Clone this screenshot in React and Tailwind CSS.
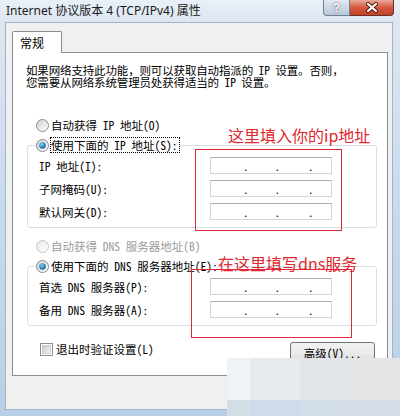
import React from 'react';

const uiFont = "[font-family:'Noto_Sans_Mono_CJK_SC','Noto_Sans_CJK_SC',sans-serif]";

const Radio = ({ checked, disabled, id }) => (
    <svg width="13" height="13" viewBox="0 0 13 13" className="shrink-0">
        <defs>
            <linearGradient id={`rf-${id}`} x1="0" y1="0" x2="1" y2="1">
                <stop offset="0" stopColor={disabled ? '#e6e6e6' : '#cfd1d4'} />
                <stop offset="1" stopColor="#ffffff" />
            </linearGradient>
            <radialGradient id={`rd-${id}`} cx="0.4" cy="0.35" r="0.7">
                <stop offset="0" stopColor="#8fd3f5" />
                <stop offset="0.6" stopColor="#2f8ac0" />
                <stop offset="1" stopColor="#1d4f74" />
            </radialGradient>
        </defs>
        <circle cx="6.5" cy="6.5" r="6" fill={`url(#rf-${id})`} stroke={disabled ? '#c4c4c4' : '#8a8c8f'} />
        {checked && <circle cx="6.5" cy="6.5" r="3.3" fill={`url(#rd-${id})`} />}
    </svg>
);

const Checkbox = () => (
    <svg width="13" height="13" viewBox="0 0 13 13" className="shrink-0">
        <defs>
            <linearGradient id="cb" x1="0" y1="0" x2="1" y2="1">
                <stop offset="0" stopColor="#c5c9ce" />
                <stop offset="1" stopColor="#f7f7f7" />
            </linearGradient>
        </defs>
        <rect x="0.5" y="0.5" width="12" height="12" fill="#fff" stroke="#8e8f8f" />
        <rect x="2.5" y="2.5" width="8" height="8" fill="url(#cb)" stroke="#b5b8bc" strokeWidth="0.6" />
    </svg>
);

const IpBox = () => (
    <div className="flex items-end w-[122px] h-[17px] bg-white border border-[#d2d5da] border-t-[#abadb3] text-[11px] leading-[14px] text-black">
        <span className="ml-[32px]">.</span>
        <span className="ml-[26px]">.</span>
        <span className="ml-[28px]">.</span>
    </div>
);

const Row = ({ label, first }) => (
    <div className={`flex items-center h-[23px] ${first ? '-mt-px' : ''}`}>
        <span className="w-[174px] pl-[3px] whitespace-nowrap">{label}</span>
        <IpBox />
    </div>
);

export default function App() {
    return (
        <div className={`relative w-[400px] h-[416px] overflow-hidden bg-gradient-to-b from-[#dfe8f3] via-[#c9daec] to-[#b9cfe7] ${uiFont}`}>
            {/* Title bar */}
            <div className="h-[22px] flex items-center pl-[6px] text-[12px] text-[#1b1b1b] [font-family:'Noto_Sans','Noto_Sans_CJK_SC',sans-serif] bg-gradient-to-b from-[#e9f0f7] to-[#dce6f1]">
                Internet 协议版本 4 (TCP/IPv4) 属性
            </div>
            <div className="absolute top-0 left-[323px] flex">
                <div className="w-[27px] h-[16px] rounded-bl-[4px] border border-t-0 border-[#6f819a] bg-gradient-to-b from-[#e4ebf3] to-[#b7c6d8] flex items-center justify-center text-[12px] leading-none font-bold text-white [text-shadow:0_0_2px_#2d3d52] [font-family:'Liberation_Sans',sans-serif]">
                    ?
                </div>
                <div className="w-[44px] h-[16px] rounded-br-[4px] border border-l-0 border-t-0 border-[#6b2f24] bg-gradient-to-b from-[#e9a897] via-[#d4583f] to-[#c3402a] flex items-center justify-center">
                    <svg width="14" height="11" viewBox="0 0 14 11">
                        <path d="M3 2 L11 9 M11 2 L3 9" stroke="#4a1a12" strokeWidth="4" strokeLinecap="round" />
                        <path d="M3 2 L11 9 M11 2 L3 9" stroke="#ffffff" strokeWidth="2.2" strokeLinecap="round" />
                    </svg>
                </div>
            </div>

            {/* Client area */}
            <div className="ml-[5px] w-[388px] h-[388px] bg-[#f0f0f0] border border-[#a3b4c8]">
                <div className="pt-[8px] pl-[6px]">
                    {/* Tab */}
                    <div className="relative z-10 w-[50px] h-[22px] -mb-px bg-white border border-b-0 border-[#898c95] rounded-t-[2px] flex items-center pl-[7px] text-[12px] text-black">
                        常规
                    </div>
                    {/* Panel */}
                    <div className="w-[376px] h-[324px] bg-white border border-[#898c95] text-[11.5px] leading-[14px] text-black">
                        <p className="pt-[11px] pl-[13px] leading-[12px] tracking-[-0.15px] whitespace-nowrap">
                            如果网络支持此功能，则可以获取自动指派的 IP 设置。否则，<br />
                            您需要从网络系统管理员处获得适当的 IP 设置。
                        </p>

                        <div className="mt-[27px] h-[20px] flex items-center gap-[2px] pl-[23px]">
                            <Radio id="r1" />
                            <span>自动获得 IP 地址(O)</span>
                        </div>
                        <fieldset className="ml-[14px] w-[350px] pl-[8px] pb-[4px] border border-[#d5dfe5] rounded-[3px]">
                            <legend className="h-[20px] flex items-center gap-[1px]">
                                <Radio id="r2" checked />
                                <span className="border border-dotted border-black pr-[1px]">使用下面的 IP 地址(S):</span>
                            </legend>
                            <Row label="IP 地址(I):" first />
                            <Row label="子网掩码(U):" />
                            <Row label="默认网关(D):" />
                        </fieldset>

                        <div className="mt-[8px] h-[20px] flex items-center gap-[2px] pl-[23px] text-[#9b9b9b]">
                            <Radio id="r3" disabled />
                            <span>自动获得 DNS 服务器地址(B)</span>
                        </div>
                        <fieldset className="ml-[14px] w-[350px] pl-[8px] pb-[4px] border border-[#d5dfe5] rounded-[3px]">
                            <legend className="h-[20px] flex items-center gap-[2px]">
                                <Radio id="r4" checked />
                                <span>使用下面的 DNS 服务器地址(E):</span>
                            </legend>
                            <Row label="首选 DNS 服务器(P):" first />
                            <Row label="备用 DNS 服务器(A):" />
                        </fieldset>

                        <div className="mt-[15px] flex justify-between pl-[27px] pr-[12px]">
                            <div className="h-[16px] flex items-center gap-[3px]">
                                <Checkbox />
                                <span>退出时验证设置(L)</span>
                            </div>
                            <button className="mt-[1px] w-[85px] h-[22px] rounded-[3px] border border-[#707070] bg-gradient-to-b from-[#f2f2f2] via-[#ebebeb] to-[#d6d6d6] text-[11.5px] text-black">
                                高级(V)...
                            </button>
                        </div>
                    </div>
                </div>
            </div>

            {/* Red annotations */}
            <div className="absolute left-[195px] top-[149px] w-[147px] h-[82px] [border:1px_solid_#e0283a]" />
            <div className="absolute left-[191px] top-[269px] w-[161px] h-[69px] [border:1px_solid_#e0283a]" />
            <div className="absolute left-[228px] top-[124px] h-[22px] leading-[22px] text-[16px] text-[#e0282f] whitespace-nowrap [font-family:'Noto_Sans_CJK_SC',sans-serif]">
                这里填入你的ip地址
            </div>
            <div className="absolute left-[218px] top-[252px] h-[22px] leading-[22px] text-[16px] text-[#e0282f] whitespace-nowrap [font-family:'Noto_Sans_CJK_SC',sans-serif]">
                在这里填写dns服务
            </div>

            {/* Blurred mosaic patch */}
            <div className="absolute left-[227px] top-[358px] w-[173px] h-[58px] grid grid-cols-[23px_50px_50px_50px] grid-rows-[42px_16px]">
                <div className="bg-[#eef3f5]" />
                <div className="bg-[#e6eaed]" />
                <div className="bg-[#e2e5e8]" />
                <div className="bg-[#e3e5e7]" />
                <div className="bg-[#d3dee9]" />
                <div className="bg-[#cddbea]" />
                <div className="bg-[#d3dde8]" />
                <div className="bg-[#d6dfe8]" />
            </div>
        </div>
    );
}
